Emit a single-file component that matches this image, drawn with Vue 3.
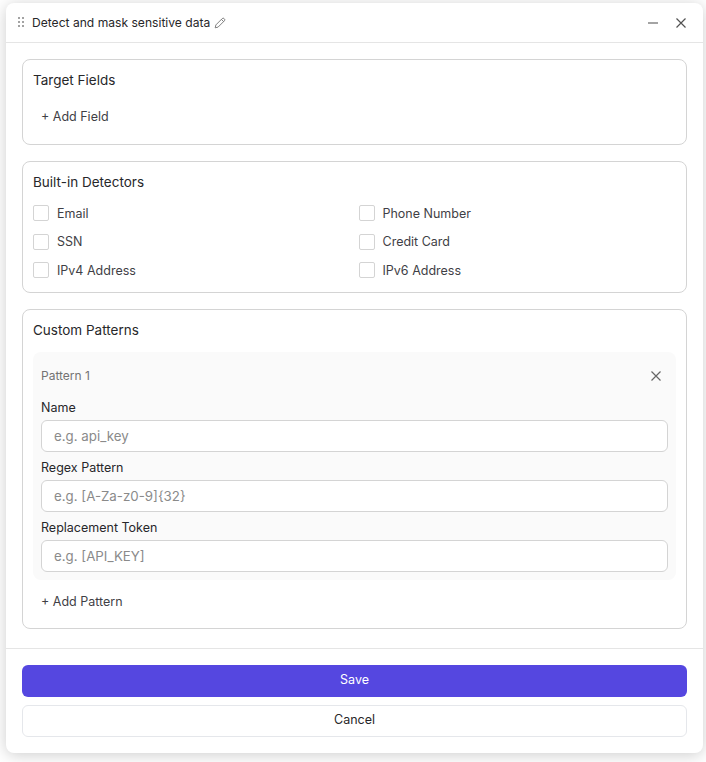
<template>
  <div class="page">
    <section class="panel">
      <header class="panel-head">
        <svg class="grip" width="8" height="12" viewBox="0 0 8 12">
          <g fill="#a3a3a3">
            <rect x="1" y="0" width="2" height="2" />
            <rect x="5" y="0" width="2" height="2" />
            <rect x="1" y="4" width="2" height="2" />
            <rect x="5" y="4" width="2" height="2" />
            <rect x="1" y="8" width="2" height="2" />
            <rect x="5" y="8" width="2" height="2" />
          </g>
        </svg>
        <span class="panel-title">Detect and mask sensitive data</span>
        <svg class="pencil" width="12" height="12" viewBox="0 0 12 12" fill="none" stroke="#737373" stroke-width="0.9">
          <path d="M1.2 10.8l.7-2.9 6.3-6.3a1.3 1.3 0 0 1 1.9 0l.3.3a1.3 1.3 0 0 1 0 1.9L4.1 10.1z" />
          <path d="M7.4 2.4l2.2 2.2" />
        </svg>
        <div class="head-actions">
          <svg width="12" height="12" viewBox="0 0 12 12" stroke="#737373" stroke-width="1.3">
            <path d="M1 6h10" />
          </svg>
          <svg width="12" height="12" viewBox="0 0 12 12" stroke="#525252" stroke-width="1.2">
            <path d="M1.5 1.5l9 9M10.5 1.5l-9 9" />
          </svg>
        </div>
      </header>

      <div class="panel-body">
        <div class="card card-fields">
          <h3 class="card-title">Target Fields</h3>
          <button class="add-btn">+ Add Field</button>
        </div>

        <div class="card card-detectors">
          <h3 class="card-title">Built-in Detectors</h3>
          <div class="detectors">
            <label v-for="d in detectors" :key="d" class="detector">
              <span class="box"></span>
              <span>{{ d }}</span>
            </label>
          </div>
        </div>

        <div class="card">
          <h3 class="card-title">Custom Patterns</h3>
          <div class="pattern">
            <div class="pattern-head">
              <span class="pattern-name">Pattern 1</span>
              <svg width="10" height="10" viewBox="0 0 10 10" stroke="#666" stroke-width="1.2">
                <path d="M.5.5l9 9M9.5.5l-9 9" />
              </svg>
            </div>
            <div v-for="f in fields" :key="f.label" class="field">
              <label class="field-label">{{ f.label }}</label>
              <input class="field-input" :placeholder="f.placeholder" />
            </div>
          </div>
          <button class="add-btn add-pattern">+ Add Pattern</button>
        </div>
      </div>

      <footer class="panel-foot">
        <button class="btn btn-save">Save</button>
        <button class="btn btn-cancel">Cancel</button>
      </footer>
    </section>
  </div>
</template>

<script setup>
const detectors = [
  'Email',
  'Phone Number',
  'SSN',
  'Credit Card',
  'IPv4 Address',
  'IPv6 Address',
];

const fields = [
  { label: 'Name', placeholder: 'e.g. api_key' },
  { label: 'Regex Pattern', placeholder: 'e.g. [A-Za-z0-9]{32}' },
  { label: 'Replacement Token', placeholder: 'e.g. [API_KEY]' },
];
</script>

<style scoped>
.page {
  height: 762px;
  padding: 3px 3px 0 6px;
  box-sizing: border-box;
  background: #fff;
  font-family: Inter, "Liberation Sans", sans-serif;
  color: #27272a;
  overflow: hidden;
}

.panel {
  width: 697px;
  height: 750px;
  background: #fff;
  border-radius: 8px;
  box-shadow: 0 2px 16px rgba(0, 0, 0, 0.2);
  display: flex;
  flex-direction: column;
}

.panel-head {
  display: flex;
  align-items: center;
  height: 39px;
  flex-shrink: 0;
  padding: 0 16px 0 11px;
  border-bottom: 1px solid #e5e5e5;
}

.grip {
  margin-right: 7px;
}

.panel-title {
  font-size: 12.1px;
  font-weight: 400;
  margin-right: 4px;
}

.head-actions {
  margin-left: auto;
  display: flex;
  gap: 16px;
}

.panel-body {
  padding: 16px 16px 19px;
  display: flex;
  flex-direction: column;
  gap: 16px;
  border-bottom: 1px solid #e5e5e5;
}

.card {
  border: 1px solid #d4d4d4;
  border-radius: 8px;
  padding: 10px;
}

.card-fields {
  padding-bottom: 12px;
}

.card-detectors {
  padding-bottom: 11px;
}

.card-title {
  margin: 0;
  font-size: 13.5px;
  line-height: 20px;
  font-weight: 400;
}

.add-btn {
  display: block;
  height: 32px;
  padding: 0 8px;
  border: none;
  background: none;
  font: inherit;
  font-size: 12.5px;
  color: #3f3f46;
}

.card-fields .add-btn {
  margin-top: 10px;
}

.detectors {
  display: grid;
  grid-template-columns: 1fr 1fr;
  gap: 8px;
  margin-top: 11px;
}

.detector {
  display: flex;
  align-items: center;
  gap: 8px;
  height: 20.5px;
  font-size: 12.5px;
  color: #3f3f46;
}

.box {
  width: 14px;
  height: 14px;
  border: 1px solid #d4d4d4;
  border-radius: 2px;
  background: #fff;
}

.pattern {
  margin-top: 12px;
  padding: 8px;
  background: #fafafa;
  border-radius: 8px;
}

.pattern-head {
  display: flex;
  align-items: center;
  justify-content: space-between;
  height: 32px;
  padding-right: 7px;
  margin-bottom: 6px;
}

.pattern-name {
  font-size: 12px;
  color: #737373;
}

.field + .field {
  margin-top: 6px;
}

.field-label {
  display: block;
  font-size: 12.5px;
  line-height: 20px;
  margin-bottom: 2px;
}

.field-input {
  display: block;
  width: 100%;
  height: 32px;
  box-sizing: border-box;
  padding: 0 12px;
  border: 1px solid #d4d4d4;
  border-radius: 6px;
  background: #fff;
  font: inherit;
  font-size: 13.3px;
}

.field-input::placeholder {
  color: #8a8a8a;
}

.add-pattern {
  margin-top: 6px;
}

.panel-foot {
  padding: 16px;
  display: flex;
  flex-direction: column;
  gap: 8px;
}

.btn {
  height: 32px;
  padding: 0 0 2px;
  border-radius: 6px;
  font: inherit;
  font-size: 12.5px;
  font-weight: 400;
}

.btn-save {
  border: none;
  background: #5547e0;
  color: #fff;
}

.btn-cancel {
  border: 1px solid #e5e7eb;
  background: #fff;
  color: #27272a;
}
</style>
